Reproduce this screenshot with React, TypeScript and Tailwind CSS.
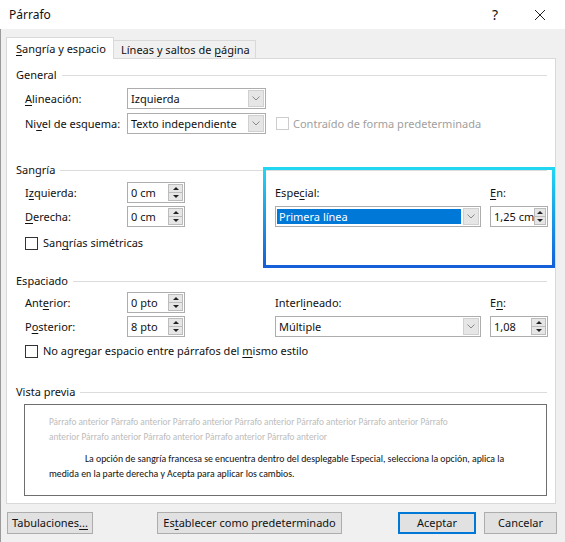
import React from "react";

// Word "Párrafo" dialog, Windows 10 look

function Key({ children }: { children: React.ReactNode }) {
  return <span className="underline underline-offset-2">{children}</span>;
}

function Chevron() {
  return (
    <svg width="8" height="5" viewBox="0 0 8 5" fill="none">
      <polyline points="0.5,0.5 4,4 7.5,0.5" stroke="#8a8a8a" strokeWidth="1" />
    </svg>
  );
}

function Combo({
  value,
  width,
  selected = false,
}: {
  value: string;
  width: string;
  selected?: boolean;
}) {
  return (
    <div className={`flex h-[21px] border border-[#adadad] bg-white ${width}`}>
      {selected ? (
        <div className="flex flex-1 p-[1px] py-[2px]">
          <div className="flex flex-1 items-center bg-[#0078d7] pl-[2px] text-white">
            {value}
          </div>
        </div>
      ) : (
        <div className="flex flex-1 items-center pl-[3px]">{value}</div>
      )}
      <div className="m-[1px] flex w-[16px] items-center justify-center border border-[#d0d0d0] bg-[#e6e6e6]">
        <Chevron />
      </div>
    </div>
  );
}

function Spin({ value, width }: { value: string; width: string }) {
  return (
    <div className={`flex h-[21px] border border-[#adadad] bg-white ${width}`}>
      <div className="flex flex-1 items-center pl-[3px]">{value}</div>
      <div className="my-[1px] mr-[1px] flex w-[15px] flex-col border border-[#bcbcbc] bg-[#e6e6e6]">
        <div className="flex flex-1 items-center justify-center border-b border-[#bcbcbc]">
          <svg width="6" height="3" viewBox="0 0 6 3">
            <polygon points="0,3 3,0 6,3" fill="#222" />
          </svg>
        </div>
        <div className="flex flex-1 items-center justify-center">
          <svg width="6" height="3" viewBox="0 0 6 3">
            <polygon points="0,0 6,0 3,3" fill="#222" />
          </svg>
        </div>
      </div>
    </div>
  );
}

function Check({ disabled = false }: { disabled?: boolean }) {
  return (
    <div
      className={`h-[13px] w-[13px] shrink-0 border bg-white ${
        disabled ? "border-[#cccccc]" : "border-[#333333]"
      }`}
    />
  );
}

function Header({ children }: { children: React.ReactNode }) {
  return (
    <div className="flex h-4 items-center">
      <span>{children}</span>
      <div className="ml-[5px] h-px flex-1 bg-[#dcdcdc]" />
    </div>
  );
}

function Button({
  children,
  className,
}: {
  children: React.ReactNode;
  className: string;
}) {
  return (
    <div
      className={`flex h-[22px] items-center justify-center bg-[#e1e1e1] ${className}`}
    >
      {children}
    </div>
  );
}

const before = Array.from({ length: 11 }, () => "Párrafo anterior").join(" ");

export default function App() {
  return (
    <div className="flex h-[542px] w-[565px] flex-col overflow-hidden whitespace-nowrap bg-[#f0f0f0] font-['Segoe_UI','Noto_Sans',sans-serif] text-[11px] leading-4 text-[#111]">
      {/* title bar */}
      <div className="flex h-[29px] shrink-0 items-center bg-white pl-[9px] text-[12px]">
        <span>Párrafo</span>
        <span className="ml-auto mr-[36px] text-[14px]">?</span>
        <svg width="12" height="12" viewBox="0 0 12 12" className="mr-[19px]">
          <path d="M1 1L11 11M11 1L1 11" stroke="#222" strokeWidth="1" />
        </svg>
      </div>

      <div className="flex flex-1 flex-col border-l border-[#9a9a9a] pl-[5px] pt-[8px]">
        {/* tabs */}
        <div className="relative z-10 flex h-[21px] items-end">
          <div className="-mb-px flex h-[22px] w-[108px] items-center border border-b-0 border-[#d9d9d9] bg-white pl-[9px]">
            <span>
              <Key>S</Key>angría y espacio
            </span>
          </div>
          <div className="flex h-[18px] w-[142px] items-center border border-l-0 border-b-0 border-[#d9d9d9] bg-[#f0f0f0] pl-[7px]">
            <span>
              Líneas y saltos de <Key>p</Key>ágina
            </span>
          </div>
        </div>

        {/* page */}
        <div className="relative flex h-[446px] w-[550px] flex-col border border-[#d9d9d9] bg-white pl-[9px] pr-[8px] pt-[8px]">
          <Header>General</Header>
          <div className="mt-[5px] flex flex-col gap-[4px] pl-[9px]">
            <div className="flex items-center">
              <span className="w-[102px]">
                <Key>A</Key>lineación:
              </span>
              <Combo value="Izquierda" width="w-[139px]" />
            </div>
            <div className="flex items-center">
              <span className="w-[102px]">
                Ni<Key>v</Key>el de esquema:
              </span>
              <Combo value="Texto independiente" width="w-[139px]" />
              <div className="ml-[10px] flex items-center gap-[4px] text-[#a0a0a0]">
                <Check disabled />
                <span>Contraído de forma predeterminada</span>
              </div>
            </div>
          </div>

          <div className="mt-[28px]">
            <Header>Sangría</Header>
          </div>
          <div className="mt-[4px] grid grid-cols-[102px_148px_215px_58px] grid-rows-[21px_21px] items-center gap-y-[3px] pl-[9px]">
            <span>
              I<Key>z</Key>quierda:
            </span>
            <Spin value="0 cm" width="w-[58px]" />
            <span>
              Espe<Key>c</Key>ial:
            </span>
            <span>
              <Key>E</Key>n:
            </span>
            <span>
              <Key>D</Key>erecha:
            </span>
            <Spin value="0 cm" width="w-[58px]" />
            <Combo value="Primera línea" width="w-[206px]" selected />
            <Spin value="1,25 cm" width="w-[58px]" />
          </div>
          <div className="mt-[8px] flex items-center gap-[5px] pl-[9px]">
            <Check />
            <span>
              San<Key>g</Key>rías simétricas
            </span>
          </div>

          <div className="mt-[22px]">
            <Header>Espaciado</Header>
          </div>
          <div className="mt-[3px] grid grid-cols-[102px_148px_215px_58px] grid-rows-[21px_21px] items-center gap-y-[3px] pl-[9px]">
            <span>
              Ant<Key>e</Key>rior:
            </span>
            <Spin value="0 pto" width="w-[58px]" />
            <span>
              Interl<Key>i</Key>neado:
            </span>
            <span>
              E<Key>n</Key>:
            </span>
            <span>
              P<Key>o</Key>sterior:
            </span>
            <Spin value="8 pto" width="w-[58px]" />
            <Combo value="Múltiple" width="w-[206px]" />
            <Spin value="1,08" width="w-[58px]" />
          </div>
          <div className="mt-[6px] flex items-center gap-[5px] pl-[9px]">
            <Check />
            <span>
              No agregar espacio entre párrafos del <Key>m</Key>ismo estilo
            </span>
          </div>

          <div className="mt-[25px]">
            <Header>Vista previa</Header>
          </div>
          <div className="ml-[8px] mt-[4px] h-[92px] whitespace-normal border border-[#6e6e6e] pl-[24px] pr-[22px] pt-[9px] font-['Carlito','Liberation_Sans',sans-serif] leading-[15px]">
            <p className="pr-[65px] text-[9.3px] text-[#bcbcbc]">{before}</p>
            <p className="mt-[8px] indent-[36px] text-[9.8px] text-[#111]">
              La opción de sangría francesa se encuentra dentro del desplegable
              Especial, selecciona la opción, aplica la medida en la parte
              derecha y Acepta para aplicar los cambios.
            </p>
          </div>

          {/* highlight frame around the "Especial" / "En" fields */}
          <div className="pointer-events-none absolute left-[256px] top-[108px] h-[101px] w-[292px] border-[3px] [border-image:linear-gradient(to_bottom,#22d6f2,#1560d8)_1]" />
        </div>

        {/* dialog buttons */}
        <div className="mt-[8px] flex pl-[1px] pr-[8px]">
          <Button className="w-[86px] border border-[#adadad]">
            <span>
              Tabulaciones<Key>...</Key>
            </span>
          </Button>
          <Button className="ml-[64px] w-[185px] border border-[#adadad]">
            <span>
              Es<Key>t</Key>ablecer como predeterminado
            </span>
          </Button>
          <Button className="ml-auto w-[78px] border-2 border-[#0078d7]">
            Aceptar
          </Button>
          <Button className="ml-[8px] w-[73px] border border-[#adadad]">
            Cancelar
          </Button>
        </div>
      </div>
    </div>
  );
}
